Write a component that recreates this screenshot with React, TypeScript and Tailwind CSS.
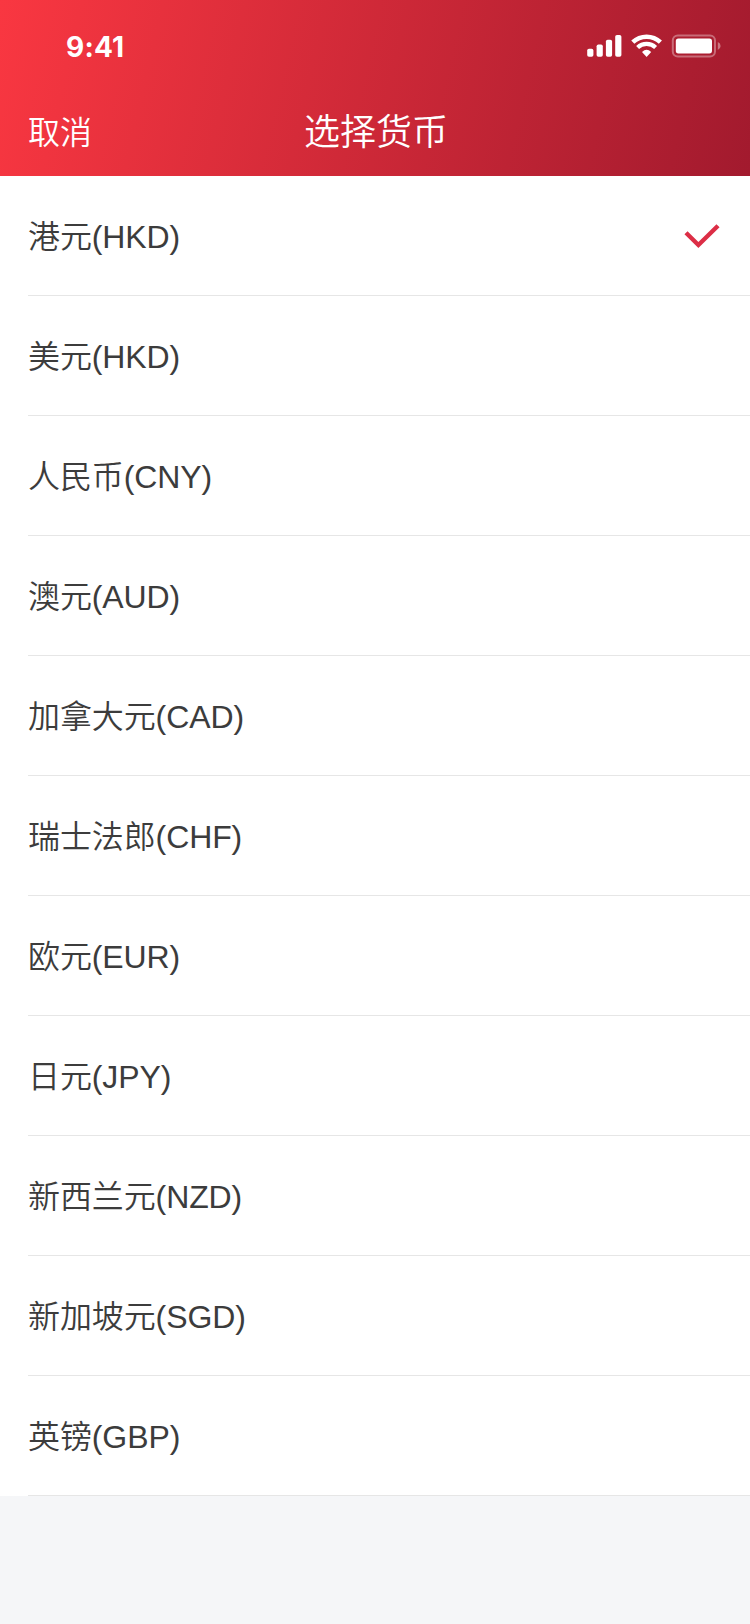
const currencies = ['港元(HKD)', '美元(HKD)', '人民币(CNY)', '澳元(AUD)', '加拿大元(CAD)', '瑞士法郎(CHF)', '欧元(EUR)', '日元(JPY)', '新西兰元(NZD)', '新加坡元(SGD)', '英镑(GBP)'];

function StatusIcons() {
  return (
    <svg width="136" height="24" viewBox="0 0 136 24" fill="none" aria-hidden="true">
      <g fill="#fff">
        <rect x="1.2" y="14.7" width="6.2" height="8" rx="1.8" />
        <rect x="10.6" y="10.5" width="6.2" height="12.2" rx="1.8" />
        <rect x="19.9" y="5.8" width="6.2" height="16.9" rx="1.8" />
        <rect x="29.2" y="1" width="6.2" height="21.7" rx="1.8" />
        <path d="M60.6 22.9 L56 18.1 Q60.6 13.2 65.2 18.1 Z" />
      </g>
      <path d="M46.8 8.2 A20 20 0 0 1 74.4 8.2" stroke="#fff" strokeWidth="4.5" />
      <path d="M51.6 13.4 A13 13 0 0 1 69.6 13.4" stroke="#fff" strokeWidth="4.2" />
      <rect x="86.8" y="1.4" width="42.2" height="21" rx="5" stroke="#fff" strokeOpacity="0.35" strokeWidth="2" />
      <rect x="89.8" y="4.4" width="36.2" height="15" rx="2.6" fill="#fff" />
      <path d="M131.8 8 Q134.6 9.2 134.6 12 Q134.6 14.8 131.8 16 Z" fill="#fff" fillOpacity="0.4" />
    </svg>
  );
}

function CheckMark() {
  return (
    <svg width="36" height="26" viewBox="0 0 36 26" fill="none" aria-hidden="true">
      <path d="M2 8.8 L14.4 21 L34 1.8" stroke="#dc2e46" strokeWidth="4.4" />
    </svg>
  );
}

export default function App() {
  return (
    <div className="min-h-[1624px] w-[750px] bg-[#f5f6f8] font-['Liberation_Sans','Noto_Sans_CJK_SC',sans-serif]">
      <header className="h-[176px] bg-[linear-gradient(103deg,#f93741_0%,#a21a2e_100%)] text-white">
        <div className="flex h-[88px] items-start justify-between pt-[34px] pr-[28px] pl-[66px]">
          <span className="font-['Inter',sans-serif] text-[28px] leading-[26px] font-bold tracking-[0.2px]">9:41</span>
          <StatusIcons />
        </div>
        <div className="grid h-[88px] grid-cols-3 items-center px-7 pt-[2px]">
          <span className="text-[32px] font-[350]">取消</span>
          <span className="pl-[2px] text-center text-[36px] font-[350]">选择货币</span>
        </div>
      </header>
      <ul className="bg-white pl-7">
        {currencies.map((name, index) => (
          <li key={name} className="flex h-[120px] items-center justify-between border-b border-[#e6e6e6] pt-[2px] pr-[30px] text-[32px] font-[350] tracking-[-0.1px] text-[#3c3c3c]">
            {name}
            {index === 0 && <CheckMark />}
          </li>
        ))}
      </ul>
    </div>
  );
}
